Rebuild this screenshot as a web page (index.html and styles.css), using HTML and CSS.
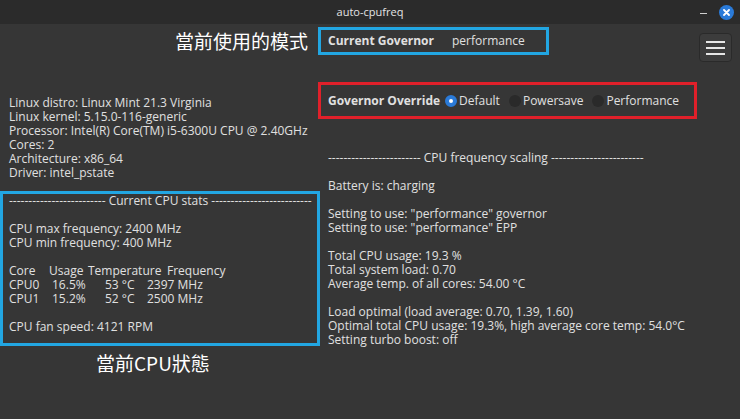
FILE: index.html
```html
<!DOCTYPE html>
<html lang="en">
<head>
  <meta charset="UTF-8">
  <meta name="viewport" content="width=device-width, initial-scale=1.0">
  <title>auto-cpufreq</title>
  <link rel="stylesheet" href="styles.css">
</head>
<body>
  <div class="window">
    <header class="titlebar">
      <span class="title">auto-cpufreq</span>
      <div class="controls">
        <span class="minimize"></span>
        <span class="close">
          <svg width="7" height="7" viewBox="0 0 7 7"><path d="M1 1L6 6M6 1L1 6" stroke="#fff" stroke-width="1.8" stroke-linecap="round"/></svg>
        </span>
      </div>
    </header>

    <main class="content">
      <section class="left">
        <div class="note note-mode">當前使用的模式</div>

        <div class="sysinfo">
          <div>Linux distro: Linux Mint 21.3 Virginia</div>
          <div>Linux kernel: 5.15.0-116-generic</div>
          <div>Processor: Intel(R) Core(TM) i5-6300U CPU @ 2.40GHz</div>
          <div>Cores: 2</div>
          <div>Architecture: x86_64</div>
          <div>Driver: intel_pstate</div>
        </div>

        <div class="cpu-stats mark-blue">
          <div class="heading">------------------------- Current CPU stats --------------------------</div>
          <div class="group">
            <div>CPU max frequency: 2400 MHz</div>
            <div>CPU min frequency: 400 MHz</div>
          </div>
          <div class="group">
            <div class="stat-head"><span>Core</span><span>Usage</span><span>Temperature</span><span>Frequency</span></div>
            <div class="stat-row"><span>CPU0</span><span>16.5%</span><span>53 °C</span><span>2397 MHz</span></div>
            <div class="stat-row"><span>CPU1</span><span>15.2%</span><span>52 °C</span><span>2500 MHz</span></div>
          </div>
          <div class="group">
            <div>CPU fan speed: 4121 RPM</div>
          </div>
        </div>

        <div class="note note-cpu">當前CPU狀態</div>
      </section>

      <section class="right">
        <div class="top-row">
          <div class="governor mark-blue">
            <b>Current Governor</b>
            <span>performance</span>
          </div>
          <button class="menu-btn"><span></span><span></span><span></span></button>
        </div>

        <div class="override mark-red">
          <b>Governor Override</b>
          <label class="opt"><span class="radio checked"></span>Default</label>
          <label class="opt"><span class="radio"></span>Powersave</label>
          <label class="opt"><span class="radio"></span>Performance</label>
        </div>

        <div class="scaling">
          <div class="heading">------------------------ CPU frequency scaling ------------------------</div>
          <div class="group">
            <div>Battery is: charging</div>
          </div>
          <div class="group">
            <div>Setting to use: "performance" governor</div>
            <div>Setting to use: "performance" EPP</div>
          </div>
          <div class="group">
            <div>Total CPU usage: 19.3 %</div>
            <div>Total system load: 0.70</div>
            <div>Average temp. of all cores: 54.00 °C</div>
          </div>
          <div class="group">
            <div>Load optimal (load average: 0.70, 1.39, 1.60)</div>
            <div>Optimal total CPU usage: 19.3%, high average core temp: 54.0°C</div>
            <div>Setting turbo boost: off</div>
          </div>
        </div>
      </section>
    </main>
  </div>
</body>
</html>
```

FILE: styles.css
```css
body {
  margin: 0;
  background: #363636;
  color: #e0e0e0;
  font-family: 'Open Sans', 'Noto Sans', sans-serif;
  font-size: 12px;
  line-height: 14px;
}

.window {
  width: 740px;
  height: 419px;
  overflow: hidden;
}

/* title bar */
.titlebar {
  height: 24px;
  background: #2b2b2b;
  display: grid;
  grid-template-columns: 1fr auto 1fr;
  align-items: center;
}

.title {
  grid-column: 2;
  font-size: 11px;
  color: #e4e4e4;
}

.controls {
  grid-column: 3;
  justify-self: end;
  display: flex;
  align-items: center;
  gap: 12px;
  padding-right: 6px;
}

.minimize {
  width: 7px;
  height: 1px;
  background: #cfcfcf;
  margin-top: 3px;
}

.close {
  width: 15px;
  height: 15px;
  border-radius: 50%;
  background: #2a7ad8;
  display: flex;
  align-items: center;
  justify-content: center;
}

/* layout */
.content {
  display: grid;
  grid-template-columns: 318px 1fr;
}

.left {
  display: flex;
  flex-direction: column;
}

.group {
  margin-top: 14px;
}

.mark-blue {
  border: 3px solid #22a6e2;
}

.mark-red {
  border: 3px solid #e0202a;
}

/* annotations */
.note {
  font-family: 'Noto Sans CJK TC', sans-serif;
  font-size: 19px;
  line-height: 24px;
  color: #fff;
}

.note-mode {
  text-align: right;
  padding: 5px 10px 0 0;
}

.note-cpu {
  margin-top: 5px;
  padding-left: 96px;
}

/* left column */
.sysinfo {
  margin-top: 43px;
  padding-left: 9px;
}

.cpu-stats {
  margin: 11px -2px 0 0;
  padding: 0 6px 9px;
}

.heading {
  white-space: nowrap;
}

.stat-head,
.stat-row {
  display: grid;
}

.stat-head {
  grid-template-columns: 40px 39px 79px auto;
}

.stat-row {
  grid-template-columns: 43px 53px 42px auto;
}

/* right column */
.top-row {
  display: flex;
  justify-content: space-between;
  align-items: flex-start;
  margin-top: 3px;
}

.governor {
  width: 231px;
  box-sizing: border-box;
  padding-left: 7px;
  line-height: 22px;
  display: flex;
}

.governor b {
  width: 124px;
}

.menu-btn {
  margin: 6px 8px 0 0;
  width: 33px;
  height: 29px;
  padding: 0;
  background: #3c3c3c;
  border: 1px solid #2a2a2a;
  border-radius: 4px;
  display: flex;
  flex-direction: column;
  align-items: center;
  justify-content: center;
  gap: 4px;
}

.menu-btn span {
  width: 19px;
  height: 2px;
  background: #e6e6e6;
}

.override {
  margin-top: 20px;
  width: 379px;
  box-sizing: border-box;
  padding-left: 7px;
  line-height: 31px;
  display: flex;
  align-items: center;
}

.override b {
  margin-right: 5px;
}

.opt {
  display: flex;
  align-items: center;
  gap: 2px;
  margin-right: 9px;
}

.radio {
  width: 12px;
  height: 12px;
  border-radius: 50%;
  background: #2a2a2a;
  box-sizing: border-box;
}

.radio.checked {
  border: 4.5px solid #2a7ad8;
  background: #fff;
}

.scaling {
  margin-top: 32px;
  padding-left: 10px;
}
```
